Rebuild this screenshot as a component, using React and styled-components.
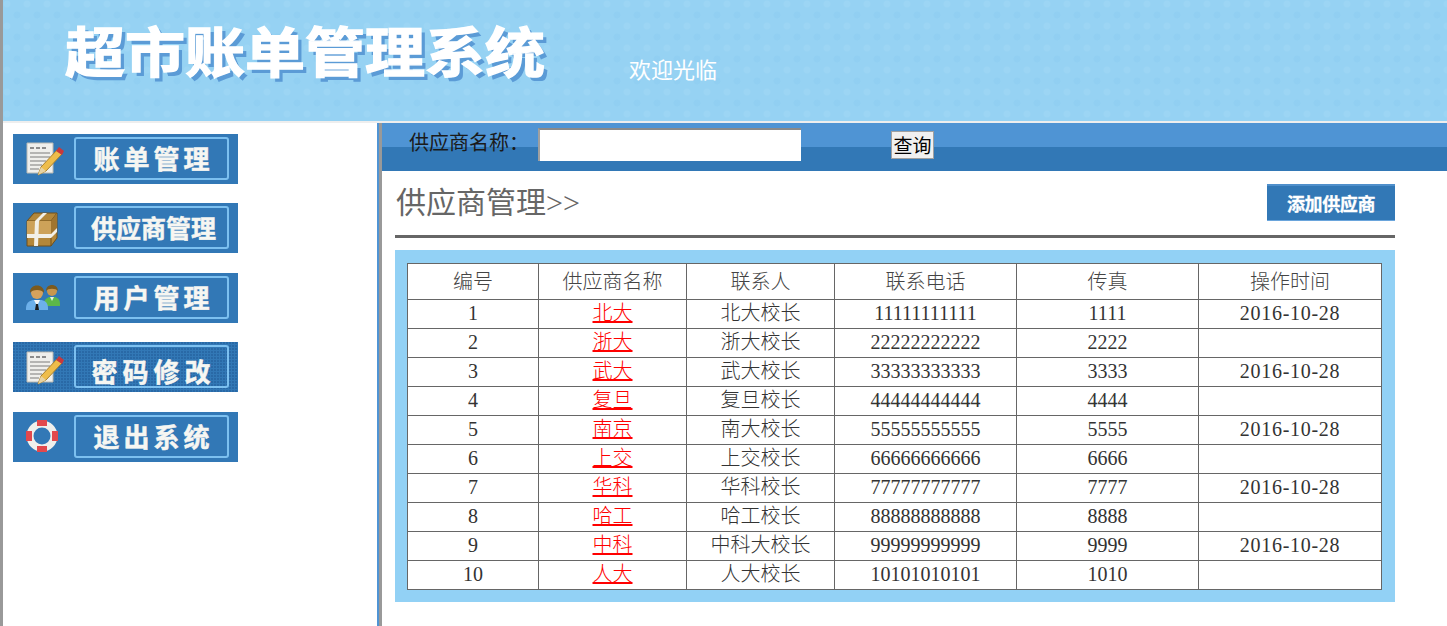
import styled, { createGlobalStyle } from "styled-components";

const MENU = [
  { name: "账单管理", icon: "note", spacing: 4, size: 26 },
  { name: "供应商管理", icon: "box", spacing: 0, size: 25 },
  { name: "用户管理", icon: "users", spacing: 4, size: 26 },
  { name: "密码修改", icon: "note", spacing: 5, size: 26, noisy: true },
  { name: "退出系统", icon: "buoy", spacing: 4, size: 26 },
];

const ROWS = [
  [1, "北大", "北大校长", "11111111111", "1111", "2016-10-28"],
  [2, "浙大", "浙大校长", "22222222222", "2222", ""],
  [3, "武大", "武大校长", "33333333333", "3333", "2016-10-28"],
  [4, "复旦", "复旦校长", "44444444444", "4444", ""],
  [5, "南京", "南大校长", "55555555555", "5555", "2016-10-28"],
  [6, "上交", "上交校长", "66666666666", "6666", ""],
  [7, "华科", "华科校长", "77777777777", "7777", "2016-10-28"],
  [8, "哈工", "哈工校长", "88888888888", "8888", ""],
  [9, "中科", "中科大校长", "99999999999", "9999", "2016-10-28"],
  [10, "人大", "人大校长", "10101010101", "1010", ""],
];

const COLUMNS = [
  { title: "编号", width: 131 },
  { title: "供应商名称", width: 148 },
  { title: "联系人", width: 148 },
  { title: "联系电话", width: 182 },
  { title: "传真", width: 182 },
  { title: "操作时间", width: 183 },
];

const NoteIcon = () => (
  <svg width="40" height="36" viewBox="0 0 40 36">
    <path d="M2 1h26v30H2z" fill="#efefec" stroke="#b9b9b2" />
    <path d="M5 5h4v2H5zM11 5h4v2h-4zM17 5h4v2h-4z" fill="#8c8c8c" />
    <path d="M5 11h20M5 15h20M5 19h16M5 23h12M5 27h9" stroke="#a3a3a0" strokeWidth="1.3" />
    <path d="M13 33l3-8L32 8l5 4-16 17z" fill="#eebd4b" stroke="#a9802c" />
    <path d="M13 33l3-8 5 4z" fill="#e7d3a3" />
    <path d="M31 9l3-4 5 4-2 4z" fill="#c8383c" />
  </svg>
);

const BoxIcon = () => (
  <svg width="34" height="36" viewBox="0 0 34 36">
    <path d="M2 9l7-8h23v25l-6 8H2z" fill="#b3873a" stroke="#6f4f1a" />
    <path d="M2 9h24v25M26 9l6-8" fill="none" stroke="#6f4f1a" />
    <path d="M2 9h24v13H2z" fill="#cda259" />
    <path d="M26 9l6-8v15l-6 6z" fill="#a0752f" />
    <path d="M9 34l1-25 8-8h4l-8 8-1 25z" fill="#f2f0e8" />
    <path d="M2 22h24l6-6v4l-6 6H2z" fill="#f2f0e8" />
  </svg>
);

const UsersIcon = () => (
  <svg width="36" height="30" viewBox="0 0 36 30">
    <path d="M19 22c0-5 4-7 6-7h4c3 0 6 2 6 7v2H19z" fill="#5cb84a" />
    <path d="M25 15l2 4 2-4z" fill="#e8f3e2" />
    <circle cx="27" cy="9" r="5" fill="#c9974f" />
    <path d="M21 9c0-8 12-8 12 0-2-3-10-3-12 0z" fill="#7b5a1e" />
    <path d="M1 26c0-6 5-8 8-8h6c4 0 8 2 8 8v2H1z" fill="#6cb0ea" />
    <path d="M9 18l3 6 3-6z" fill="#f3f6f8" />
    <path d="M11 22h2l1 6h-4z" fill="#1c1c1c" />
    <circle cx="12" cy="11" r="6" fill="#d5a25c" />
    <path d="M5 11C4 1 20 1 19 11c-2-4-12-4-14 0z" fill="#7b5a1e" />
  </svg>
);

const BuoyIcon = () => (
  <svg width="34" height="34" viewBox="0 0 34 34">
    <circle cx="17" cy="17" r="12" fill="none" stroke="#f0efec" strokeWidth="7" />
    <path d="M12 1h10v6H12zM12 27h10v6H12zM1 12h6v10H1zM27 12h6v10h-6z" fill="#e2484c" />
  </svg>
);

const ICONS = { note: NoteIcon, box: BoxIcon, users: UsersIcon, buoy: BuoyIcon };

const App = () => {
  return (
    <Page>
      <GlobalStyle />
      <Header>
        <Logo>超市账单管理系统</Logo>
        <Welcome>欢迎光临</Welcome>
      </Header>
      <Body>
        <Sidebar>
          {MENU.map((item) => {
            const Icon = ICONS[item.icon];
            const drop = item.icon === "note" || item.icon === "box";
            return (
              <MenuItem key={item.name} $noisy={item.noisy}>
                <IconSlot $drop={drop}>
                  <Icon />
                </IconSlot>
                <MenuFrame $noisy={item.noisy} $spacing={item.spacing} $size={item.size}>
                  {item.name}
                </MenuFrame>
              </MenuItem>
            );
          })}
        </Sidebar>
        <Main>
          <SearchBar>
            <SearchLabel>供应商名称：</SearchLabel>
            <SearchInput type="text" />
            <SearchButton type="button">查询</SearchButton>
          </SearchBar>
          <Content>
            <TitleRow>
              <Title>供应商管理&gt;&gt;</Title>
              <AddButton>添加供应商</AddButton>
            </TitleRow>
            <Panel>
              <Table>
                <colgroup>
                  {COLUMNS.map((col) => (
                    <Col key={col.title} $width={col.width} />
                  ))}
                </colgroup>
                <thead>
                  <tr>
                    {COLUMNS.map((col) => (
                      <HeadCell key={col.title}>{col.title}</HeadCell>
                    ))}
                  </tr>
                </thead>
                <tbody>
                  {ROWS.map((row) => (
                    <tr key={row[0]}>
                      <Cell>{row[0]}</Cell>
                      <Cell>
                        <SupplierLink href="#">{row[1]}</SupplierLink>
                      </Cell>
                      <Cell>{row[2]}</Cell>
                      <Cell>{row[3]}</Cell>
                      <Cell>{row[4]}</Cell>
                      <DateCell>{row[5]}</DateCell>
                    </tr>
                  ))}
                </tbody>
              </Table>
            </Panel>
          </Content>
        </Main>
      </Body>
    </Page>
  );
};

const SERIF = `"Liberation Serif", "Noto Sans CJK SC", serif`;
const SANS = `"Noto Sans CJK SC", "Liberation Sans", sans-serif`;

const GlobalStyle = createGlobalStyle`
  html, body {
    margin: 0;
    height: 100%;
    overflow: hidden;
    background: #fff;
    font-family: ${SERIF};
  }
`;

const Page = styled.div`
  height: 626px;
  border-left: 3px solid #999;
  box-sizing: border-box;
  display: flex;
  flex-direction: column;
  overflow: hidden;
`;

const Header = styled.header`
  flex: none;
  height: 121px;
  border-bottom: 2px solid #eee;
  display: flex;
  align-items: flex-start;
  background-color: #96d2f3;
  background-image:
    radial-gradient(circle at 4px 4px, rgba(255, 255, 255, 0.06) 3px, transparent 4px),
    radial-gradient(circle at 14px 15px, rgba(90, 170, 225, 0.07) 3px, transparent 4px);
  background-size: 20px 22px;
`;

const Logo = styled.div`
  margin: 14px 0 0 62px;
  width: 480px;
  font-family: ${SANS};
  font-size: 60px;
  line-height: 80px;
  font-weight: 700;
  color: #fff;
  white-space: nowrap;
  transform: scaleY(0.9);
  transform-origin: top left;
  -webkit-text-stroke: 1.5px #fff;
  text-shadow: 4px 4px 0 #5b9bd6;
`;

const Welcome = styled.div`
  margin: 55px 0 0 84px;
  font-size: 22px;
  line-height: 32px;
  color: #fff;
`;

const Body = styled.div`
  flex: 1;
  display: flex;
  min-height: 0;
`;

const Sidebar = styled.nav`
  flex: none;
  width: 376px;
  box-sizing: border-box;
  padding: 10.9px 0 0 10px;
  display: flex;
  flex-direction: column;
  gap: 19.5px;
`;

const MenuItem = styled.div`
  width: 225px;
  height: 50px;
  box-sizing: border-box;
  padding: 3px 9px 4px 0;
  display: flex;
  background-color: #3278b6;
  ${(p) =>
    p.$noisy &&
    `background-image: radial-gradient(circle at 1px 1px, rgba(20, 70, 130, 0.3) 1px, transparent 1.2px);
     background-size: 3px 3px;`}
`;

const IconSlot = styled.div`
  flex: none;
  width: 61px;
  box-sizing: border-box;
  padding: ${(p) => (p.$drop ? "4px" : "0")} 0 0 12px;
  display: flex;
  align-items: center;
`;

const MenuFrame = styled.div`
  flex: 1;
  box-sizing: border-box;
  border: 2px solid #7cc0f0;
  border-radius: 3px;
  display: flex;
  align-items: center;
  justify-content: center;
  padding: ${(p) => (p.$noisy ? "8px" : "0")} 0 ${(p) => (p.$noisy ? "0" : "2px")} 4px;
  font-family: ${SANS};
  font-weight: 700;
  font-size: ${(p) => p.$size}px;
  letter-spacing: ${(p) => p.$spacing}px;
  color: #f6f6f2;
  white-space: nowrap;
  -webkit-text-stroke: 0.5px #f6f6f2;
`;

const Main = styled.main`
  flex: 1;
  min-width: 0;
  border-left: 3px solid #999;
  box-shadow: -2px 0 0 #4f94d4;
  display: flex;
  flex-direction: column;
`;

const SearchBar = styled.div`
  flex: none;
  height: 48px;
  box-sizing: border-box;
  padding-left: 27px;
  display: flex;
  align-items: flex-start;
  background: linear-gradient(#4f94d4 0, #4f94d4 24px, #3278b6 24px, #3278b6 100%);
`;

const SearchLabel = styled.span`
  width: 129px;
  margin-top: 6px;
  font-size: 20px;
  line-height: 28px;
  color: #1a1a1a;
`;

const SearchInput = styled.input`
  width: 263px;
  height: 33px;
  margin-top: 5px;
  padding: 0;
  box-sizing: border-box;
  background: #fff;
  border: none;
  border-top: 2px solid #8a8a8a;
  border-left: 2px solid #a0a0a0;
  outline: none;
`;

const SearchButton = styled.button`
  width: 43px;
  height: 28px;
  margin: 8px 0 0 90px;
  padding: 0;
  box-sizing: border-box;
  background: #f0f0f0;
  border: 1px solid #a0a0a0;
  font-family: ${SANS};
  font-size: 19px;
  line-height: 24px;
  color: #000;
`;

const Content = styled.div`
  width: 1000px;
  margin-left: 13px;
`;

const TitleRow = styled.div`
  margin-top: 13px;
  height: 51px;
  border-bottom: 3px solid #666;
  display: flex;
  justify-content: space-between;
  align-items: flex-start;
`;

const Title = styled.h1`
  margin: 0 0 0 1px;
  font-size: 30px;
  line-height: 37px;
  font-weight: 400;
  color: #666;
`;

const AddButton = styled.div`
  width: 128px;
  height: 37px;
  box-sizing: border-box;
  border-top: 2px solid #4f8fcb;
  border-bottom: 1px solid #6aa5dc;
  display: flex;
  align-items: center;
  justify-content: center;
  background: #3278b6;
  font-family: ${SANS};
  font-size: 18px;
  font-weight: 700;
  letter-spacing: -0.4px;
  color: #fff;
  -webkit-text-stroke: 0.3px #fff;
`;

const Panel = styled.section`
  margin-top: 12px;
  height: 352px;
  box-sizing: border-box;
  padding: 13px 13px 0 12px;
  background: #92d1f5;
`;

const Table = styled.table`
  width: 974px;
  table-layout: fixed;
  border-collapse: collapse;
  background: #fff;
`;

const Col = styled.col`
  width: ${(p) => p.$width}px;
`;

const HeadCell = styled.th`
  height: 36px;
  padding: 0 0 2px;
  box-sizing: border-box;
  border: 1px solid #666;
  font-size: 20px;
  font-weight: 300;
  color: #444;
  text-align: center;
`;

const Cell = styled.td`
  height: 29px;
  padding: 0 0 2px;
  box-sizing: border-box;
  border: 1px solid #666;
  font-size: 20px;
  font-weight: 300;
  line-height: 26px;
  color: #333;
  text-align: center;
`;

const DateCell = styled(Cell)`
  letter-spacing: 0.7px;
`;

const SupplierLink = styled.a`
  color: #f00;
  text-decoration: underline;
  text-decoration-thickness: 2px;
`;

export default App;
